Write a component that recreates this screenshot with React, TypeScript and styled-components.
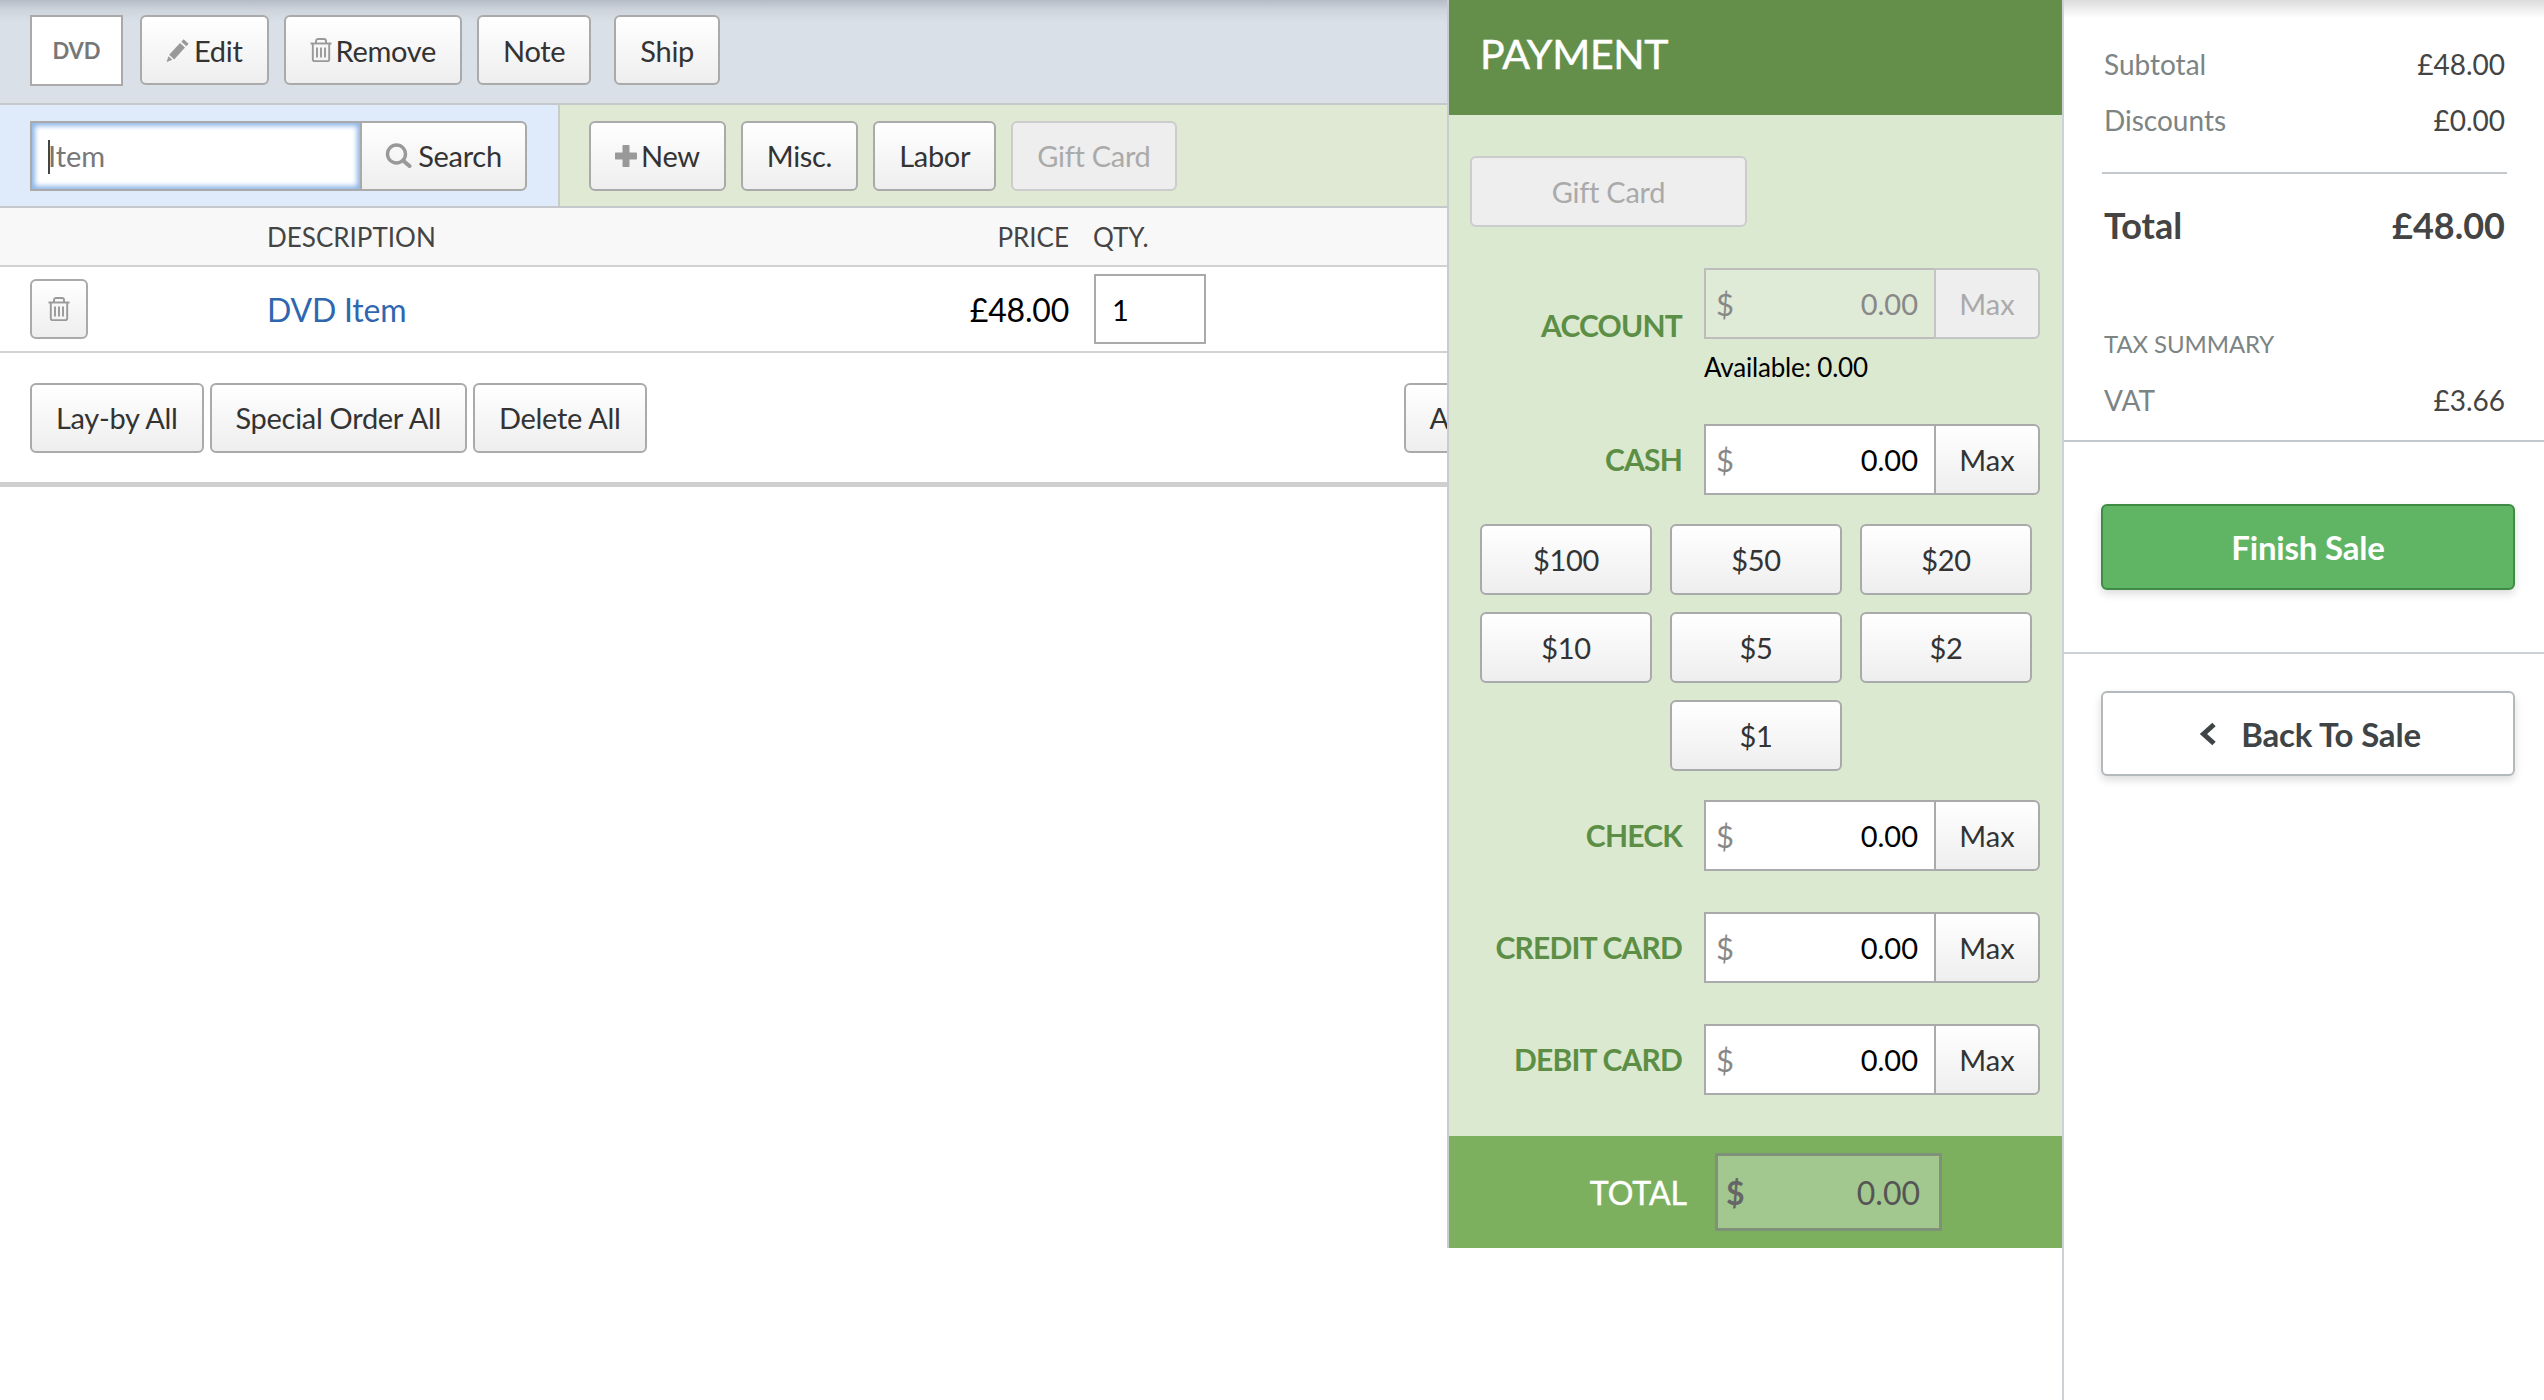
import { createGlobalStyle, styled } from 'styled-components'

const GlobalStyle = createGlobalStyle`
  html, body {
    margin: 0;
    padding: 0;
    background: #fff;
  }
  body {
    font-family: Lato, "Open Sans", sans-serif;
    color: #333;
  }
  * {
    box-sizing: border-box;
  }
`

function PencilIcon() {
  return (
    <IconSvg viewBox="0 0 24 24" width="24" height="24" fill="#999">
      <path d="M17.6 1.2l5 4.6-2.3 2.5-5-4.6z" />
      <path d="M14 5l5 4.6L8.2 21.4l-5-4.6z" />
      <path d="M2.4 18.2l3.9 3.6L.6 24z" />
    </IconSvg>
  )
}

function TrashIcon() {
  return (
    <IconSvg viewBox="0 0 22 24" width="22" height="24" fill="none" stroke="#999" strokeWidth="1.9">
      <path d="M.5 5.500h21" />
      <path d="M6 5V3C6 1.800 6.800 1 8 1h6c1.200 0 2 .8 2 2v2" />
      <path d="M2.800 6v15.500c0 1 .7 1.600 1.700 1.600h13c1 0 1.700-.6 1.700-1.600V6" />
      <path d="M7 9.500v10M11 9.500v10M15 9.500v10" />
    </IconSvg>
  )
}

function SearchIcon() {
  return (
    <IconSvg viewBox="0 0 27 25" width="27" height="25" fill="none" stroke="#999">
      <circle cx="11.500" cy="11" r="9" strokeWidth="3.400" />
      <path d="M18 17.500l6.500 5.500" strokeWidth="4" strokeLinecap="round" />
    </IconSvg>
  )
}

function PlusIcon() {
  return (
    <IconSvg viewBox="0 0 22 22" width="22" height="22" fill="#999">
      <path d="M7.500 1c0-.6.4-1 1-1h5c.6 0 1 .4 1 1v6.500H21c.6 0 1 .4 1 1v5c0 .6-.4 1-1 1h-6.500V21c0 .6-.4 1-1 1h-5c-.6 0-1-.4-1-1v-6.500H1c-.6 0-1-.4-1-1v-5c0-.6.4-1 1-1h6.500z" />
    </IconSvg>
  )
}

function ChevronIcon() {
  return (
    <IconSvg viewBox="0 0 18 24" width="18" height="24" fill="none" stroke="#3f4446" strokeWidth="5">
      <path d="M15 2.500L4.500 12 15 21.500" />
    </IconSvg>
  )
}

function MoneyField({ label, value = '0.00', disabled = false, note }: { label: string; value?: string; disabled?: boolean; note?: string }) {
  return (
    <PayRow>
      <PayLabel>{label}</PayLabel>
      <div>
        <FieldGroup>
          <FieldBox $disabled={disabled}>
            <Dollar>$</Dollar>
            <FieldInput value={value} readOnly disabled={disabled} $disabled={disabled} />
          </FieldBox>
          <MaxButton disabled={disabled}>Max</MaxButton>
        </FieldGroup>
        {note && <Available>{note}</Available>}
      </div>
    </PayRow>
  )
}

const cashAmounts = ['$100', '$50', '$20', '$10', '$5', '$2']

function App() {
  return (
    <>
      <GlobalStyle />
      <Page>
        <Main>
          <TopBar>
            <TypeBadge>DVD</TypeBadge>
            <Button>
              <PencilIcon />
              Edit
            </Button>
            <Button>
              <TrashIcon />
              Remove
            </Button>
            <Button>Note</Button>
            <ShipButton>Ship</ShipButton>
          </TopBar>

          <SearchRow>
            <SearchPanel>
              <ItemField>
                <Caret />
                <ItemInput placeholder="Item" />
              </ItemField>
              <SearchButton>
                <SearchIcon />
                Search
              </SearchButton>
            </SearchPanel>
            <AddPanel>
              <Button>
                <PlusIcon />
                New
              </Button>
              <Button>Misc.</Button>
              <Button>Labor</Button>
              <Button disabled>Gift Card</Button>
            </AddPanel>
          </SearchRow>

          <TableHead>
            <span />
            <HeadCell>DESCRIPTION</HeadCell>
            <HeadCell $right>PRICE</HeadCell>
            <QtyHead>QTY.</QtyHead>
          </TableHead>

          <TableRow>
            <RowTrash>
              <TrashIcon />
            </RowTrash>
            <ItemLink href="#">DVD Item</ItemLink>
            <Price>£48.00</Price>
            <QtyInput value="1" readOnly />
          </TableRow>

          <ActionRow>
            <Button>Lay-by All</Button>
            <Button>Special Order All</Button>
            <Button>Delete All</Button>
            <FarButton>Add Discount</FarButton>
          </ActionRow>
        </Main>

        <PaymentColumn>
          <PaymentPanel>
            <PaymentHeader>PAYMENT</PaymentHeader>
            <PaymentBody>
              <GiftButton disabled>Gift Card</GiftButton>
              <MoneyField label="ACCOUNT" disabled note="Available: 0.00" />
              <MoneyField label="CASH" />
              <CashGrid>
                {cashAmounts.map((amount) => (
                  <CashButton key={amount}>{amount}</CashButton>
                ))}
                <LastCashButton>$1</LastCashButton>
              </CashGrid>
              <MoneyField label="CHECK" />
              <MoneyField label="CREDIT CARD" />
              <MoneyField label="DEBIT CARD" />
            </PaymentBody>
            <TotalBar>
              <TotalLabel>TOTAL</TotalLabel>
              <TotalBox>
                <TotalDollar>$</TotalDollar>
                <span>0.00</span>
              </TotalBox>
            </TotalBar>
          </PaymentPanel>
        </PaymentColumn>

        <Summary>
          <Figures>
            <SummaryLine>
              <span>Subtotal</span>
              <SummaryValue>£48.00</SummaryValue>
            </SummaryLine>
            <SummaryLine>
              <span>Discounts</span>
              <SummaryValue>£0.00</SummaryValue>
            </SummaryLine>
            <SummaryRule />
            <TotalLine>
              <span>Total</span>
              <span>£48.00</span>
            </TotalLine>
            <TaxTitle>TAX SUMMARY</TaxTitle>
            <SummaryLine>
              <span>VAT</span>
              <SummaryValue>£3.66</SummaryValue>
            </SummaryLine>
          </Figures>
          <FinishBlock>
            <FinishButton>Finish Sale</FinishButton>
          </FinishBlock>
          <BackBlock>
            <BackButton>
              <ChevronIcon />
              Back To Sale
            </BackButton>
          </BackBlock>
        </Summary>
      </Page>
    </>
  )
}

const Page = styled.div`
  display: flex;
  width: 100%;
  height: 1400px;
  overflow: hidden;
`

const Main = styled.main`
  flex: 0 0 1447px;
  overflow: hidden;
`

const IconSvg = styled.svg`
  flex-shrink: 0;
`

const TopBar = styled.div`
  display: flex;
  align-items: center;
  gap: 15px;
  height: 105px;
  padding: 0 30px 3px;
  background: linear-gradient(#b5bcc7 0, #cdd4dc 10px, #d9e0e7 22px);
  border-bottom: 2px solid #c6c9cb;
`

const TypeBadge = styled.div`
  display: flex;
  align-items: center;
  justify-content: center;
  width: 93px;
  height: 71px;
  margin-right: 2px;
  background: #fff;
  border: 2px solid #aaa;
  color: #777;
  font-size: 22px;
  font-weight: 700;
`

const Button = styled.button`
  display: inline-flex;
  align-items: center;
  justify-content: center;
  gap: 4px;
  flex-shrink: 0;
  height: 70px;
  padding: 0 24px;
  background: linear-gradient(#fff, #eee);
  border: 2px solid #aaa;
  border-radius: 6px;
  color: #333;
  font-family: inherit;
  font-size: 29px;
  letter-spacing: -0.3px;
  white-space: nowrap;

  &:disabled {
    background: #eee;
    border-color: #ccc;
    color: #aaa;
  }
`

const ShipButton = styled(Button)`
  margin-left: 8px;
`

const SearchRow = styled.div`
  display: flex;
  height: 103px;
  border-bottom: 2px solid #c6c9cb;
`

const SearchPanel = styled.div`
  display: flex;
  align-items: center;
  width: 560px;
  padding-left: 30px;
  background: #dfeafa;
  border-right: 2px solid #c6ccc6;
`

const ItemField = styled.div`
  position: relative;
  width: 332px;
  height: 70px;
  background: #fff;
  border: 2px solid #aaa;
  box-shadow: inset 0 0 5px 3px #8fb6e6;
`

const ItemInput = styled.input`
  width: 100%;
  height: 100%;
  padding: 0 16px;
  background: transparent;
  border: 0;
  outline: 0;
  font-family: inherit;
  font-size: 29px;

  &::placeholder {
    color: #777;
    opacity: 1;
  }
`

const Caret = styled.span`
  position: absolute;
  top: 17px;
  left: 16px;
  width: 2px;
  height: 34px;
  background: #444;
`

const SearchButton = styled(Button)`
  gap: 6px;
  width: 165px;
  padding: 0;
  border-left: 0;
  border-radius: 0 6px 6px 0;
`

const AddPanel = styled.div`
  display: flex;
  align-items: center;
  gap: 15px;
  flex: 1;
  padding-left: 29px;
  background: #e0e9d4;
`

const TableHead = styled.div`
  display: grid;
  grid-template-columns: 237px 602px 200px 378px;
  align-items: center;
  height: 59px;
  padding-left: 30px;
  background: #f8f8f8;
  border-bottom: 2px solid #d2d2d2;
`

const HeadCell = styled.span<{ $right?: boolean }>`
  color: #444;
  font-size: 26px;
  text-align: ${(props) => (props.$right ? 'right' : 'left')};
`

const QtyHead = styled(HeadCell)`
  margin-left: 24px;
`

const TableRow = styled.div`
  display: grid;
  grid-template-columns: 237px 602px 200px 378px;
  align-items: center;
  height: 86px;
  padding-left: 30px;
  border-bottom: 2px solid #d2d2d2;
`

const RowTrash = styled.button`
  display: flex;
  align-items: center;
  justify-content: center;
  width: 58px;
  height: 60px;
  padding: 0;
  background: linear-gradient(#fff, #eee);
  border: 2px solid #aaa;
  border-radius: 6px;
`

const ItemLink = styled.a`
  color: #2f67ae;
  font-size: 32px;
  letter-spacing: -0.2px;
  text-decoration: none;
`

const Price = styled.span`
  color: #000;
  font-size: 32px;
  letter-spacing: -0.2px;
  text-align: right;
`

const QtyInput = styled.input`
  width: 112px;
  height: 70px;
  margin-left: 25px;
  padding: 0 16px;
  border: 2px solid #aaa;
  outline: 0;
  color: #000;
  font-family: inherit;
  font-size: 29px;
`

const ActionRow = styled.div`
  display: flex;
  align-items: center;
  gap: 6px;
  height: 134px;
  padding-left: 30px;
  border-bottom: 5px solid #cfcfcf;
`

const FarButton = styled(Button)`
  margin-left: 751px;
`

const PaymentColumn = styled.div`
  flex: 0 0 615px;
`

const PaymentPanel = styled.section`
  border-left: 2px solid #c9cdd0;
  background: #dbe9d1;
`

const PaymentHeader = styled.h2`
  display: flex;
  align-items: center;
  height: 115px;
  margin: 0;
  padding: 0 0 8px 31px;
  background: #648f4b;
  color: #fff;
  font-size: 41px;
  font-weight: 400;
  letter-spacing: -0.3px;
  -webkit-text-stroke: 0.5px #fff;
`

const PaymentBody = styled.div`
  display: flex;
  flex-direction: column;
  gap: 41px;
  height: 1021px;
  padding: 41px 0 0;
`

const GiftButton = styled(Button)`
  width: 277px;
  height: 71px;
  margin-left: 21px;
`

const PayRow = styled.div`
  display: flex;
  align-items: center;
  gap: 22px;
`

const PayLabel = styled.label`
  flex: 0 0 233px;
  padding-bottom: 2px;
  color: #5c8f45;
  font-size: 30px;
  font-weight: 700;
  text-align: right;
  white-space: nowrap;
  letter-spacing: -0.8px;
`

const FieldGroup = styled.div`
  display: flex;
  width: 336px;
  height: 71px;
`

const FieldBox = styled.div<{ $disabled: boolean }>`
  display: flex;
  align-items: center;
  width: 230px;
  padding: 0 16px 0 10px;
  background: ${(props) => (props.$disabled ? '#dfead7' : '#fff')};
  border: 2px solid ${(props) => (props.$disabled ? '#bdbdbd' : '#aaa')};
  border-right: 0;
`

const Dollar = styled.span`
  color: #888;
  font-size: 31px;
`

const FieldInput = styled.input<{ $disabled: boolean }>`
  flex: 1;
  min-width: 0;
  padding: 0;
  background: transparent;
  border: 0;
  outline: 0;
  color: ${(props) => (props.$disabled ? '#888' : '#000')};
  font-family: inherit;
  font-size: 29px;
  text-align: right;
`

const MaxButton = styled.button`
  flex: 1;
  padding: 0;
  background: linear-gradient(#fff, #eee);
  border: 2px solid #aaa;
  border-radius: 0 6px 6px 0;
  color: #333;
  font-family: inherit;
  font-size: 29px;

  &:disabled {
    background: #eee;
    border-color: #c4c4c4;
    color: #aaa;
  }
`

const Available = styled.div`
  margin: 13px 0 1px;
  color: #000;
  font-size: 26px;
  letter-spacing: -0.2px;
  line-height: 30px;
`

const CashGrid = styled.div`
  display: grid;
  grid-template-columns: repeat(3, 172px);
  grid-auto-rows: 71px;
  gap: 17px 18px;
  margin: -12px 0 -12px 31px;
`

const CashButton = styled(Button)`
  width: 100%;
  height: 100%;
  padding: 0;
`

const LastCashButton = styled(CashButton)`
  grid-column: 2;
`

const TotalBar = styled.div`
  display: flex;
  align-items: center;
  height: 112px;
  background: #7cb05f;
`

const TotalLabel = styled.div`
  flex: 0 0 238px;
  color: #fff;
  font-size: 32px;
  font-weight: 400;
  text-align: right;
  -webkit-text-stroke: 0.4px #fff;
`

const TotalBox = styled.div`
  display: flex;
  align-items: center;
  justify-content: space-between;
  width: 227px;
  height: 78px;
  margin-left: 28px;
  padding: 0 19px 0 8px;
  background: #a2c78f;
  border: 3px solid #7f9176;
  color: #555;
  font-size: 32px;
`

const TotalDollar = styled.span`
  color: #666;
  font-weight: 700;
`

const Summary = styled.aside`
  flex: 1;
  border-left: 2px solid #cdd2d6;
  background: linear-gradient(#dcdcdc 0, #fff 18px);
`

const Figures = styled.div`
  height: 442px;
  padding: 36px 39px 0 40px;
  border-bottom: 2px solid #c2c8cc;
`

const SummaryLine = styled.div`
  display: flex;
  justify-content: space-between;
  align-items: center;
  height: 56px;
  color: #7c8484;
  font-size: 28px;
`

const SummaryValue = styled.span`
  color: #444;
`

const SummaryRule = styled.div`
  height: 2px;
  margin: 24px -2px 0 -2px;
  background: #c2c8cc;
`

const TotalLine = styled.div`
  display: flex;
  justify-content: space-between;
  align-items: center;
  height: 62px;
  margin-top: 20px;
  color: #444;
  font-size: 36px;
  font-weight: 700;
`

const TaxTitle = styled.div`
  margin-top: 73px;
  color: #7c8484;
  font-size: 24px;
  letter-spacing: -0.1px;
  line-height: 30px;
  margin-bottom: 13px;
`

const FinishBlock = styled.div`
  height: 212px;
  padding: 62px 29px 0 37px;
  border-bottom: 2px solid #cdd2d6;
`

const FinishButton = styled.button`
  width: 100%;
  height: 86px;
  background: #5fb564;
  border: 2px solid #3f8a45;
  border-radius: 6px;
  box-shadow: 0 4px 8px rgba(0, 0, 0, 0.14);
  color: #fff;
  font-family: inherit;
  font-size: 33px;
  font-weight: 700;
  letter-spacing: -0.2px;
`

const BackBlock = styled.div`
  padding: 37px 29px 0 37px;
`

const BackButton = styled.button`
  display: flex;
  align-items: center;
  justify-content: center;
  gap: 24px;
  width: 100%;
  height: 85px;
  padding: 0 0 0 4px;
  background: #fff;
  border: 2px solid #b4b9bc;
  border-radius: 6px;
  box-shadow: 0 4px 8px rgba(0, 0, 0, 0.14);
  color: #3f4446;
  font-family: inherit;
  font-size: 33px;
  font-weight: 700;
  letter-spacing: -0.2px;
`

export default App
